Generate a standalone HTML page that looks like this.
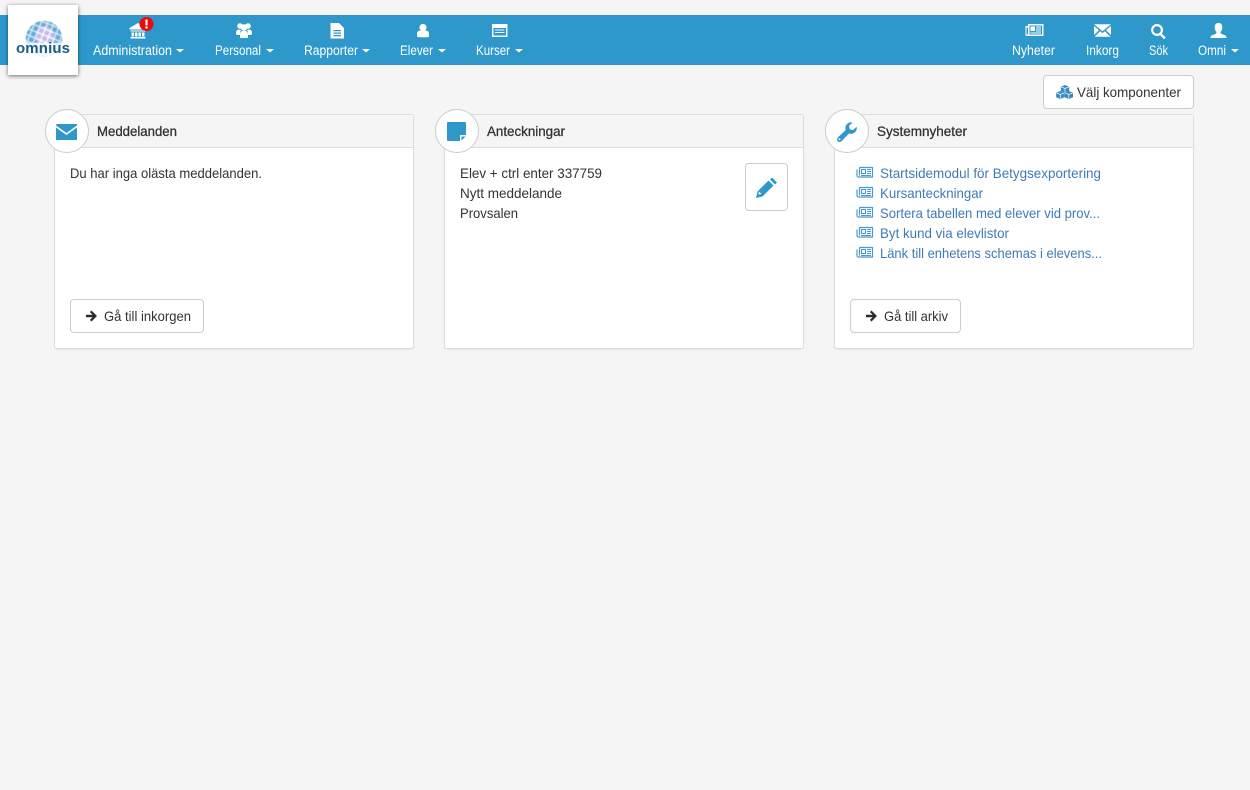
<!DOCTYPE html>
<html lang="sv">
<head>
<meta charset="utf-8">
<title>Omnius</title>
<style>
html,body{margin:0;padding:0;width:1250px;height:790px;overflow:hidden;background:#f5f5f5;}
body{position:relative;font-family:"Liberation Sans",sans-serif;}
.bar{position:absolute;left:0;top:15px;width:1250px;height:50px;background:#2e98cb;}
.logo{position:absolute;left:8px;top:5px;width:70px;height:70px;background:#fff;box-shadow:0 1px 4px rgba(0,0,0,.55);}
.card{position:absolute;top:114px;width:358px;height:233px;background:#fff;border:1px solid #ddd;border-radius:3px;box-shadow:0 1px 1px rgba(0,0,0,.05);}
.head{position:absolute;left:0;top:0;right:0;height:32px;background:#f5f5f5;border-bottom:1px solid #ddd;}
.circle{position:absolute;top:109px;width:42px;height:42px;background:#fff;border:1px solid #ccc;border-radius:50%;}
.btn{position:absolute;box-sizing:border-box;background:#fff;border:1px solid #ccc;border-radius:4px;}
svg.o{position:absolute;left:0;top:0;}
text{font-family:"Liberation Sans",sans-serif;font-size:14px;}
.n{fill:#fff;font-size:13.5px;}
.t{fill:#333;}
.h{fill:#333;stroke:#333;stroke-width:.3px;}
.l{fill:#3f7ab5;}
</style>
</head>
<body>
<div class="bar"></div>
<div class="logo"></div>
<div class="card" style="left:54px"><div class="head"></div></div>
<div class="card" style="left:444px"><div class="head"></div></div>
<div class="card" style="left:834px"><div class="head"></div></div>
<div class="circle" style="left:45px"></div>
<div class="circle" style="left:435px"></div>
<div class="circle" style="left:825px"></div>
<div class="btn" style="left:1043px;top:75px;width:151px;height:34px"></div>
<div class="btn" style="left:745px;top:163px;width:43px;height:48px"></div>
<div class="btn" style="left:70px;top:299px;width:134px;height:34px"></div>
<div class="btn" style="left:850px;top:299px;width:111px;height:34px"></div>

<svg class="o" width="1250" height="790" viewBox="0 0 1250 790" xmlns="http://www.w3.org/2000/svg">
<defs>
<clipPath id="g"><circle cx="44" cy="39" r="18.5"/></clipPath>
<filter id="b" x="-10%" y="-10%" width="120%" height="120%"><feGaussianBlur stdDeviation=".4"/></filter>
<pattern id="pb" width="6" height="6" patternUnits="userSpaceOnUse" patternTransform="rotate(22 44 39)"><rect width="4.7" height="4.7" fill="#62aad9"/></pattern>
<pattern id="pl" width="6" height="6" patternUnits="userSpaceOnUse" patternTransform="rotate(22 44 39)"><rect width="6" height="6" fill="#fff"/><rect width="4.7" height="4.7" fill="#c4baea"/></pattern>
<g id="news">
  <path fill="none" stroke="#4a9ad4" stroke-width="1.2" d="M3.500 1.500h13v9.500H2.500a1.500 1.500 0 0 1-1.500-1.500V3.500M3.500 1.500V9.500"/>
  <rect x="5.500" y="3.500" width="4" height="4" fill="none" stroke="#4a9ad4"/>
  <path stroke="#4a9ad4" d="M11 3.500h4M11 5.500h4M11 7.500h4M5 9.500h10"/>
</g>
</defs>

<!-- logo -->
<g filter="url(#b)" clip-path="url(#g)">
  <circle cx="44" cy="39" r="18.500" fill="#dcedf6"/>
  <circle cx="44" cy="39" r="18.500" fill="url(#pb)"/>
  <ellipse cx="45" cy="37" rx="9" ry="11" fill="url(#pl)"/>
  <rect x="24" y="43" width="40" height="16" fill="#fff" opacity=".88"/>
</g>
<text x="16" y="53" textLength="54" lengthAdjust="spacing" style="font-size:15px;font-weight:bold" fill="#1c5a80">omnius</text>

<!-- nav icons -->
<g fill="#fff">
  <path d="M138 23l8.500 5v1.500h-17V28zM130.500 30.500h15v1h-15zM131.500 32.500h2.500v4h-2.500zM135 32.500h2.500v4H135zM138.500 32.500h2.500v4h-2.500zM142 32.500h2.500v4H142zM130.500 37h15v1.500h-15z"/>
  <circle cx="240" cy="26" r="2.800"/><circle cx="248" cy="26" r="2.800"/><circle cx="244" cy="27.500" r="3.300"/>
  <path d="M236 33q0-3.500 3-3.500l2 .8-1 1.700v3h-2.500q-1.500 0-1.500-2zM252 33q0-3.500-3-3.500l-2 .8 1 1.700v3h2.500q1.500 0 1.500-2zM240 38v-4q0-3.200 4-3.200t4 3.200v4z"/>
  <path fill-rule="evenodd" d="M330.500 23h8.500l5 5v10.500h-13.500zM333.500 30v1.200h7.500V30zM333.500 32.500v1.200h7.500v-1.200zM333.500 35v1.200h7.500V35z"/>
  <circle cx="423" cy="27.500" r="3.600"/>
  <path d="M417 36v-2q0-3.500 3.500-3.500h5q3.500 0 3.500 3.500v2q0 1.200-1.500 1.200h-9Q417 37.200 417 36z"/>
  <path fill-rule="evenodd" d="M492 24h15.500v13H492zM493.500 28v7.500h12.500V28zM495 29.500h9.500v1H495zM495 32h9.500v1H495z"/>
  <path fill-rule="evenodd" d="M1028 24h15.500v12h-17a1 1 0 0 1-1-1v-9h2.500zM1029.500 25.500V34.500h12.500V25.500zM1030.500 26.500h4.500v4.500h-4.500zM1036 26.500h5v1h-5zM1036 28.500h5v1h-5zM1036 30.500h5v1h-5zM1030.500 32.500h10.500v1h-10.500zM1026.500 27.500V34.500h1.500V27.500z"/>
  <path d="M1094 24.200h17l-8.500 7zM1094 26l5 4.200-5 4.800zM1111 26l-5 4.200 5 4.800zM1094.500 36.800l5.700-5.500 2.300 1.800 2.300-1.800 5.700 5.500z"/>
  <path fill-rule="evenodd" d="M1157 24a6 6 0 0 1 4.800 9.600l4 4-1.700 1.600-4-4A6 6 0 1 1 1157 24zm0 2.200a3.800 3.800 0 1 0 0 7.600 3.800 3.800 0 0 0 0-7.600z"/>
  <path d="M1218.500 23q3.800 0 3.800 4.200 0 3-1.700 4.600v1.500q1 1 4 1.800 1.900.6 1.900 2.900h-16q0-2.300 1.900-2.900 3-.8 4-1.800v-1.500q-1.700-1.600-1.700-4.600 0-4.200 3.800-4.200z"/>
  <path d="M176 49h8l-4 3.500zM266 49h8l-4 3.500zM362 49h8l-4 3.500zM438 49h8l-4 3.500zM515 49h8l-4 3.500zM1231 49h8l-4 3.500z"/>
</g>
<circle cx="146.500" cy="24" r="7" fill="#ee0a0a"/>
<rect x="145.400" y="19.500" width="2.200" height="6" rx=".6" fill="#fff"/><rect x="145.400" y="26.500" width="2.200" height="2" fill="#fff"/>

<!-- nav labels -->
<text class="n" x="93" y="55" textLength="79" lengthAdjust="spacingAndGlyphs">Administration</text>
<text class="n" x="215" y="55" textLength="46" lengthAdjust="spacingAndGlyphs">Personal</text>
<text class="n" x="304" y="55" textLength="54" lengthAdjust="spacingAndGlyphs">Rapporter</text>
<text class="n" x="400" y="55" textLength="33" lengthAdjust="spacingAndGlyphs">Elever</text>
<text class="n" x="476" y="55" textLength="34" lengthAdjust="spacingAndGlyphs">Kurser</text>
<text class="n" x="1012" y="55" textLength="43" lengthAdjust="spacingAndGlyphs">Nyheter</text>
<text class="n" x="1086" y="55" textLength="33" lengthAdjust="spacingAndGlyphs">Inkorg</text>
<text class="n" x="1149" y="55" textLength="19" lengthAdjust="spacingAndGlyphs">Sök</text>
<text class="n" x="1198" y="55" textLength="28" lengthAdjust="spacingAndGlyphs">Omni</text>

<!-- välj komponenter -->
<g fill="#3a8cc4">
  <path d="M1065 85l4.200 1.800v4.400l-4.200 1.800-4.200-1.800v-4.400z"/>
  <path d="M1060.300 91l4.200 1.800v4.400l-4.200 1.800-4.200-1.800v-4.400z"/>
  <path d="M1068.800 91l4.200 1.800v4.400l-4.200 1.800-4.200-1.800v-4.400z"/>
</g>
<path d="M1061 86.800l4 1.700 4-1.700M1065 88.500v4M1056.300 92.800l4 1.700 4-1.700M1060.300 94.500v4M1064.800 92.800l4 1.700 4-1.700M1068.800 94.500v4" fill="none" stroke="#fff" stroke-width=".7"/>
<text class="t" x="1077" y="97" textLength="104" lengthAdjust="spacingAndGlyphs">Välj komponenter</text>

<!-- card headers -->
<text class="h" x="97" y="136" textLength="80" lengthAdjust="spacingAndGlyphs">Meddelanden</text>
<text class="h" x="487" y="136" textLength="78" lengthAdjust="spacingAndGlyphs">Anteckningar</text>
<text class="h" x="877" y="136" textLength="90" lengthAdjust="spacingAndGlyphs">Systemnyheter</text>

<!-- card icons -->
<path fill="#2e98cb" d="M56.500 124H77v1.500L66.500 133 56 125.500zM56 127.500l10.500 7.500 10.500-7.500V140H56z"/>
<path fill="#2e98cb" d="M448 122h17a1 1 0 0 1 1 1v12h-6v6h-12a1 1 0 0 1-1-1v-17a1 1 0 0 1 1-1zM461.500 136.500h4l-4 4z"/>
<path fill="#2e98cb" fill-rule="evenodd" d="M851 122.300a5.800 5.800 0 0 0-5.300 7.700L837.800 137.500a2.600 2.600 0 0 0 3.700 3.700L849 133.500a5.800 5.800 0 0 0 7.600-6.800l-3.500 3.400-3.300-.9-.9-3.200 3.500-3.400a5.800 5.800 0 0 0-1.400-.3zM839.700 138.300a1 1 0 1 0 0 1.900 1 1 0 0 0 0-1.900z"/>

<!-- card bodies -->
<text class="t" x="70" y="178" textLength="192" lengthAdjust="spacingAndGlyphs">Du har inga olästa meddelanden.</text>
<text class="t" x="460" y="178" textLength="142" lengthAdjust="spacingAndGlyphs">Elev + ctrl enter 337759</text>
<text class="t" x="460" y="198" textLength="102" lengthAdjust="spacingAndGlyphs">Nytt meddelande</text>
<text class="t" x="460" y="218" textLength="58" lengthAdjust="spacingAndGlyphs">Provsalen</text>
<path fill="#2e98cb" d="M772 177.500l5 5-2 2-5-5zM768.500 180.500l5 5-11 11-6.500 1.500 1.500-6.500z"/>
<path fill="#fff" d="M759 191.500l2.500 2.500-2.500.6-.6-.6z"/>

<use href="#news" x="856" y="166"/>
<use href="#news" x="856" y="186"/>
<use href="#news" x="856" y="206"/>
<use href="#news" x="856" y="226"/>
<use href="#news" x="856" y="246"/>
<text class="l" x="880" y="178" textLength="221" lengthAdjust="spacingAndGlyphs">Startsidemodul för Betygsexportering</text>
<text class="l" x="880" y="198" textLength="103" lengthAdjust="spacingAndGlyphs">Kursanteckningar</text>
<text class="l" x="880" y="218" textLength="220" lengthAdjust="spacingAndGlyphs">Sortera tabellen med elever vid prov...</text>
<text class="l" x="880" y="238" textLength="129" lengthAdjust="spacingAndGlyphs">Byt kund via elevlistor</text>
<text class="l" x="880" y="258" textLength="222" lengthAdjust="spacingAndGlyphs">Länk till enhetens schemas i elevens...</text>

<!-- buttons -->
<path fill="#2b2b2b" d="M91.500 310.500l5.500 5.500-5.500 5.500-1.600-1.600 2.700-2.700H86v-2.400h6.600l-2.700-2.700z"/>
<path fill="#2b2b2b" d="M871.500 310.500l5.500 5.500-5.500 5.500-1.600-1.600 2.700-2.700H866v-2.400h6.600l-2.700-2.700z"/>
<text class="t" x="104" y="321" textLength="87" lengthAdjust="spacingAndGlyphs">Gå till inkorgen</text>
<text class="t" x="884" y="321" textLength="64" lengthAdjust="spacingAndGlyphs">Gå till arkiv</text>
</svg>
</body>
</html>
